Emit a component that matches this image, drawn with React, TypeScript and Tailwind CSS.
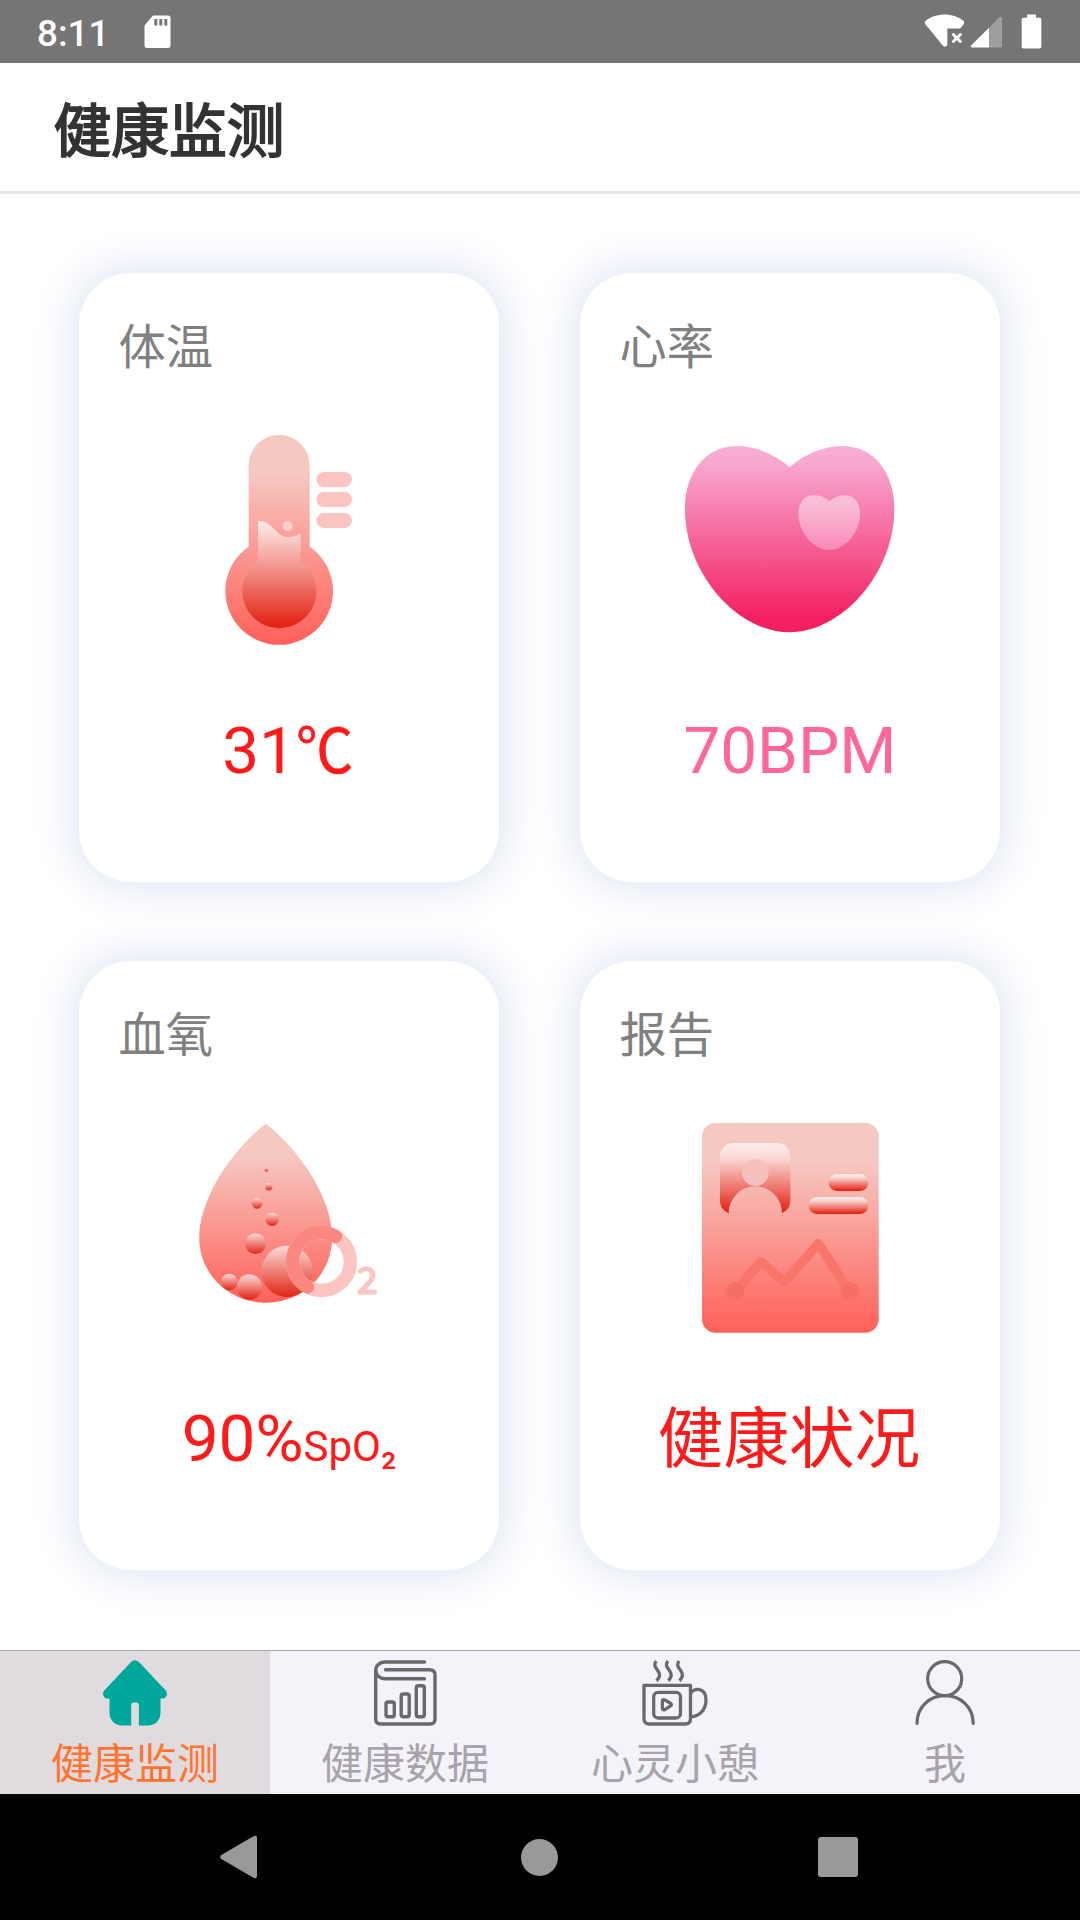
import React from 'react';

const ThermometerIcon = () => (
  <svg className="h-[210px] w-[210px]" viewBox="-47 75 630 630">
    <defs>
      <linearGradient id="tube" gradientUnits="userSpaceOnUse" x1="0" y1="75" x2="0" y2="704">
        <stop offset="0.18" stopColor="#f6c8c2" />
        <stop offset="1" stopColor="#ff6059" />
      </linearGradient>
      <linearGradient id="mercury" gradientUnits="userSpaceOnUse" x1="0" y1="332" x2="0" y2="655">
        <stop offset="0" stopColor="#fde5e3" />
        <stop offset="0.08" stopColor="#fcdedb" />
        <stop offset="0.97" stopColor="#e32415" />
      </linearGradient>
    </defs>
    <path
      d="M147 410V166a91.500 91.500 0 0 1 183 0V410A161.500 161.500 0 1 1 147 410Z"
      fill="url(#tube)"
    />
    <path
      d="M175 333C217 329 228 381 265 381C280 381 291 377 303 370V453A111 111 0 1 1 175 453Z"
      fill="url(#mercury)"
    />
    <circle cx="264" cy="348" r="15" fill="#fdcfcc" />
    <rect x="350" y="186" width="107" height="45" rx="22.500" fill="#fcc5c2" />
    <rect x="350" y="246" width="107" height="45" rx="22.500" fill="#fcc5c2" />
    <rect x="350" y="309" width="107" height="45" rx="22.500" fill="#fcc5c2" />
  </svg>
);

const HeartIcon = () => {
  const heart =
    'M389 141C342 101 285 78 232 78C138 78 75 155 75 268C75 460 232 637 389 637C546 637 703 460 703 268C703 155 640 78 546 78C493 78 436 101 389 141Z';

  return (
    <svg className="h-[210px] w-[210px]" viewBox="75 45 630 630">
      <defs>
        <linearGradient id="heart" gradientUnits="userSpaceOnUse" x1="0" y1="78" x2="0" y2="637">
          <stop offset="0" stopColor="#f9afd8" />
          <stop offset="0.1" stopColor="#f8a6cf" />
          <stop offset="0.93" stopColor="#f41f61" />
        </linearGradient>
        <linearGradient id="heartSmall" gradientUnits="userSpaceOnUse" x1="0" y1="78" x2="0" y2="637">
          <stop offset="0.18" stopColor="#fabdd6" />
          <stop offset="1" stopColor="#f888b7" />
        </linearGradient>
      </defs>
      <path d={heart} fill="url(#heart)" />
      <path d={heart} fill="url(#heartSmall)" transform="translate(393 202) scale(0.295)" />
    </svg>
  );
};

const bubbles = [
  { cx: 260, cy: 209, r: 6 },
  { cx: 267, cy: 260, r: 11 },
  { cx: 232, cy: 310, r: 16 },
  { cx: 277, cy: 358, r: 20 },
  { cx: 227, cy: 431, r: 31 },
  { cx: 322, cy: 514, r: 77 },
  { cx: 148, cy: 546, r: 24.5 },
  { cx: 209, cy: 561, r: 38 },
];

const OxygenIcon = () => (
  <svg className="h-[210px] w-[210px]" viewBox="12.500 69 630 630">
    <defs>
      <linearGradient id="drop" gradientUnits="userSpaceOnUse" x1="0" y1="71" x2="0" y2="608">
        <stop offset="0.18" stopColor="#f6c8c2" />
        <stop offset="1" stopColor="#ff6059" />
      </linearGradient>
      <linearGradient id="bubble" x1="0" y1="0" x2="0" y2="1">
        <stop offset="0" stopColor="#fddcd9" />
        <stop offset="1" stopColor="#e02414" />
      </linearGradient>
    </defs>
    <path
      d="M258 71C150 155 58 300 58 412C58 525 150 608 258 608C366 608 457 525 457 412C457 300 366 155 258 71Z"
      fill="url(#drop)"
    />
    {bubbles.map((b) => (
      <circle key={b.cy} cx={b.cx} cy={b.cy} r={b.r} fill="url(#bubble)" />
    ))}
    <circle cx="425" cy="485" r="86.500" fill="none" stroke="#fcc5c2" strokeWidth="40" />
    <path
      d="M467 409A86.500 86.500 0 0 0 338.500 485A86.500 86.500 0 0 0 383 561"
      fill="none"
      stroke="#fa8780"
      strokeWidth="40"
      strokeLinecap="round"
    />
    <text
      x="530"
      y="582"
      fontSize="114"
      className="font-['Noto_Sans_CJK_SC',sans-serif] font-medium"
      fill="#fcc5c2"
      stroke="#fcc5c2"
      strokeWidth="3"
    >
      2
    </text>
  </svg>
);

const ReportIcon = () => (
  <svg className="h-[210px] w-[210px]" viewBox="15 69 630 630">
    <defs>
      <linearGradient id="paper" gradientUnits="userSpaceOnUse" x1="0" y1="69" x2="0" y2="698">
        <stop offset="0.18" stopColor="#f6c8c2" />
        <stop offset="1" stopColor="#ff6059" />
      </linearGradient>
      <linearGradient id="badge" x1="0" y1="0" x2="0" y2="1">
        <stop offset="0" stopColor="#feeeed" />
        <stop offset="0.2" stopColor="#fbdad7" />
        <stop offset="0.97" stopColor="#e32415" />
      </linearGradient>
    </defs>
    <rect x="66" y="69" width="530" height="629" rx="40" fill="url(#paper)" />
    <rect x="120" y="129" width="211" height="213" rx="40" fill="url(#badge)" />
    <circle cx="226" cy="218" r="40" fill="#f5c0bb" />
    <path d="M146 345V339a80 80 0 0 1 160 0V345Z" fill="url(#paper)" />
    <rect x="446" y="222" width="119" height="51" rx="25" fill="url(#badge)" />
    <rect x="386" y="291" width="179" height="51" rx="25" fill="url(#badge)" />
    <path
      d="M165 575L243 485L313 547L415 431L509 575"
      fill="none"
      stroke="#f8756c"
      strokeWidth="28"
      strokeLinecap="round"
      strokeLinejoin="round"
    />
    <circle cx="165" cy="574" r="28" fill="#f76e65" />
    <circle cx="509" cy="574" r="28" fill="#f76e65" />
  </svg>
);

const HomeIcon = () => (
  <svg className="h-[66px] w-[66px]" viewBox="0 0 66 66" fill="#00a79b">
    <path d="M28.800 2.200Q33 -1.600 37.200 2.200L63.500 30.200C66.500 33.500 64.500 38.600 60.500 38.600H58.500V53C58.500 60 53 65.600 46 65.600H36.900V45Q36.900 42.500 34.500 42.500H31.600Q29.200 42.500 29.200 45V65.600H20C13 65.600 7.500 60 7.500 53V38.600H5.500C1.500 38.600 -0.500 33.500 2.500 30.200Z" />
  </svg>
);

const DataIcon = () => (
  <svg
    className="h-[66px] w-[66px]"
    viewBox="0 0 66 66"
    fill="none"
    stroke="#696969"
    strokeWidth="3.400"
    strokeLinecap="round"
    strokeLinejoin="round"
  >
    <path d="M52.500 2H13C7.500 2 3.700 5.800 3.700 10.500V59Q3.700 64 8.700 64H58Q63 64 63 59V15Q63 9.700 57.500 9.700H13.500" />
    <path d="M3.700 10.500C3.700 15 7.500 18.700 13 18.700H52.500" />
    <rect x="14" y="42" width="8.300" height="14.700" rx="2" />
    <rect x="29.200" y="34" width="8" height="22.700" rx="2" />
    <rect x="44.300" y="25.700" width="8" height="31" rx="2" />
  </svg>
);

const CupIcon = () => (
  <svg
    className="h-[66px] w-[66px]"
    viewBox="0 0 66 66"
    fill="none"
    stroke="#696969"
    strokeWidth="3.300"
  >
    <path d="M2 25.300H48.500V58.500Q48.500 64 43 64H7.500Q2 64 2 58.500Z" strokeLinejoin="round" />
    <path d="M48.500 33C52 27.500 64 27 64 40C64 50 57 57 48.500 56.700" />
    <rect x="11.700" y="32.300" width="26.800" height="25.700" rx="4.500" />
    <path d="M20.400 41.500Q20.400 38.800 23 40L28.500 43.300Q30.200 44.700 28.500 46L23 49.600Q20.400 50.500 20.400 48Z" />
    <path d="M14.200 1C9.500 7.500 17.500 9 17.500 15Q17.500 18 14.500 20.700" />
    <path d="M25.900 1C21.200 7.500 29.200 9 29.200 15Q29.200 18 26.200 20.700" />
    <path d="M37.100 1C32.400 7.500 40.400 9 40.400 15Q40.400 18 37.400 20.700" />
  </svg>
);

const UserIcon = () => (
  <svg
    className="h-[66px] w-[66px]"
    viewBox="0 0 66 66"
    fill="none"
    stroke="#696969"
    strokeWidth="3.200"
    strokeLinecap="round"
  >
    <circle cx="32.700" cy="18.700" r="17" />
    <path d="M5 63.500C5 47 17.500 35.700 33 35.700S61.200 47 61.200 63.500" />
  </svg>
);

const StatusBar = () => (
  <div className="flex h-[63px] items-center justify-between bg-[#757575] pr-[38px] pl-[37px]">
    <div className="flex items-center">
      <span className="w-[107px] pt-[4px] font-[Roboto,sans-serif] text-[36.750px] leading-[59px] font-medium text-white">
        8:11
      </span>
      <svg className="h-[34px] w-[27px]" viewBox="0 0 27 34">
        <path d="M10 0.500H24Q26.500 0.500 26.500 3V30.500Q26.500 33 24 33H3Q0.500 33 0.500 30.500V11.500Q0.500 10.300 1.300 9.400L8.300 1.300Q9 0.500 10 0.500Z" fill="#fff" />
        <path d="M10.300 4h3v6.500h-3zM15.300 4h3v6.500h-3zM20.300 4h3v6.500h-3z" fill="#757575" />
      </svg>
    </div>
    <svg className="h-[36px] w-[118px]" viewBox="192 40.500 354 108">
      <path
        d="M195 70Q193 65 197 61C228 36 279 36 310 61Q314 65 312 70L301 84H262V133Q261 138 254 139Q250 138 248 135Z"
        fill="#fff"
      />
      <path d="M280 102L301 123M301 102L280 123" stroke="#fff" strokeWidth="9" strokeLinecap="round" />
      <path d="M387 82V141H336Q330 139 334 134Z" fill="#fff" />
      <path d="M387 82L418 50Q424 45 426 52V137Q426 141 422 141H387Z" fill="#9e9e9e" />
      <path
        d="M501 42H528V52H540Q544 53 544 57V139Q544 144 539 144H490Q485 144 485 139V57Q485 53 490 52H501Z"
        fill="#fff"
      />
    </svg>
  </div>
);

type CardProps = {
  title: string;
  icon: React.ReactNode;
  children: React.ReactNode;
  color: string;
};

const Card = ({ title, icon, children, color }: CardProps) => (
  <div className="flex h-[609px] flex-col items-center rounded-[52px] bg-white shadow-[0_0_42px_10px_#e4e8f5]">
    <h2 className="w-full pt-[41px] pl-[39.500px] text-[47.250px] leading-[68px] text-[#808080]">
      {title}
    </h2>
    <div className="mt-[53px]">{icon}</div>
    <p className={`mt-[58px] text-[65.600px] leading-[96px] whitespace-nowrap ${color}`}>{children}</p>
  </div>
);

const tabs = [
  { label: '健康监测', icon: <HomeIcon />, active: true },
  { label: '健康数据', icon: <DataIcon />, active: false },
  { label: '心灵小憩', icon: <CupIcon />, active: false },
  { label: '我', icon: <UserIcon />, active: false },
];

const TabBar = () => (
  <nav className="grid h-[144px] grid-cols-4 border-t border-[#a4a8a4] bg-[#f4f3f9]">
    {tabs.map((tab) => (
      <button
        key={tab.label}
        className={`flex flex-col items-center pt-[9px] ${
          tab.active ? 'bg-[#e0dbdf] text-[#ff7530]' : 'text-[#a8a2ab]'
        }`}
      >
        {tab.icon}
        <span className="mt-[9px] text-[42px] leading-[60px]">{tab.label}</span>
      </button>
    ))}
  </nav>
);

const SystemNav = () => (
  <div className="flex h-[126px] items-center bg-black pl-[220px]">
    <svg className="h-[44px] w-[37px]" viewBox="0 0 37 44" fill="#999">
      <path d="M1.300 20L33.500 1.200Q37 -0.500 37 3V41Q37 44.500 33.500 42.800L1.300 24Q-1 22 1.300 20Z" />
    </svg>
    <div className="ml-[264px] h-[37px] w-[37px] rounded-full bg-[#999]" />
    <div className="ml-[260px] h-[40px] w-[40px] rounded-[3px] bg-[#999]" />
  </div>
);

const App = () => {
  return (
    <div className="flex h-[1920px] w-[1080px] flex-col overflow-hidden bg-white font-[Roboto,'Noto_Sans_CJK_SC',sans-serif]">
      <StatusBar />

      {/* Page title */}
      <header className="flex h-[131px] items-center border-b-[3px] border-[#e4e4e4] pt-[10px] pl-[53.500px]">
        <h1 className="text-[57.750px] text-[#333] [-webkit-text-stroke:1.8px_#333]">健康监测</h1>
      </header>

      {/* Health cards */}
      <main className="grid flex-1 grid-cols-[420px_420px] content-start gap-x-[81px] gap-y-[79px] pt-[79px] pl-[79px]">
        <Card title="体温" icon={<ThermometerIcon />} color="text-[#ff1a1a]">
          31
          <span className="inline-block w-[60px] origin-left scale-x-[0.94] text-[61px] leading-[60px] [-webkit-text-stroke:0.6px_#ff1a1a]">
            ℃
          </span>
        </Card>
        <Card title="心率" icon={<HeartIcon />} color="text-[#ff6699]">
          70BPM
        </Card>
        <Card title="血氧" icon={<OxygenIcon />} color="text-[#ff1a1a]">
          90%<span className="text-[42px]">SpO₂</span>
        </Card>
        <Card title="报告" icon={<ReportIcon />} color="text-[#ff1a1a]">
          <span className="inline-block pt-px pr-[2px]">健康状况</span>
        </Card>
      </main>

      <TabBar />
      <SystemNav />
    </div>
  );
};

export default App;
